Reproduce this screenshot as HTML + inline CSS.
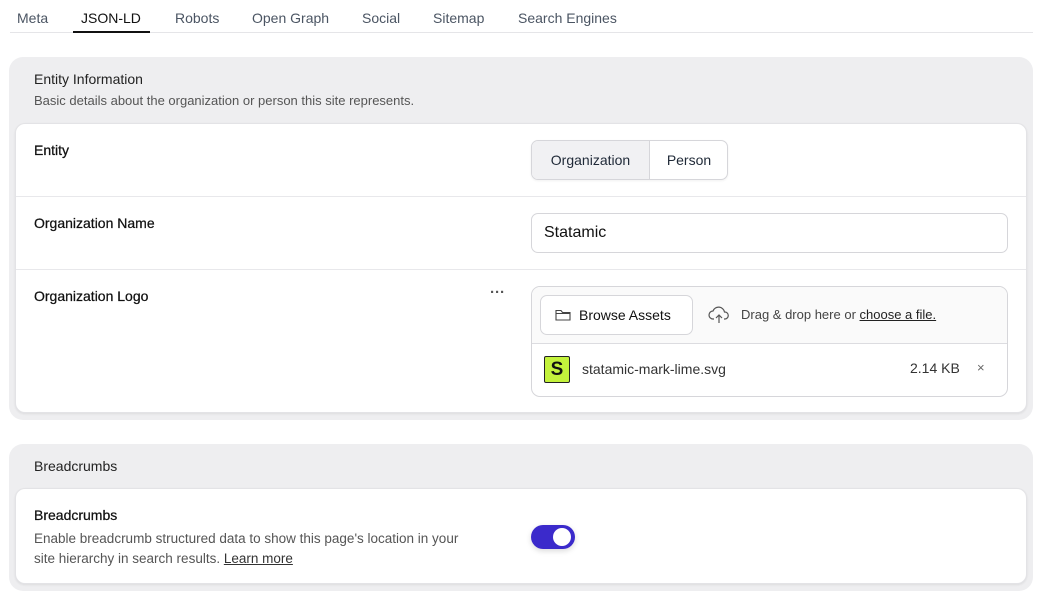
<!DOCTYPE html>
<html><head><style>
*{box-sizing:border-box;margin:0;padding:0}
body{width:1044px;height:600px;background:#fff;font-family:"Liberation Sans",sans-serif;color:#1f2937;position:relative;overflow:hidden}
.a{position:absolute}
.tab{position:absolute;top:10px;font-size:14px;color:#4b5563}
.panel{position:absolute;left:9px;width:1024px;background:#eeeef0;border-radius:14px}
.card{position:absolute;left:6px;width:1012px;background:#fff;border:1px solid #e3e3e6;border-radius:10px;box-shadow:0 1px 2px rgba(0,0,0,.08)}
.lbl{position:absolute;left:18px;font-size:14px;color:#111;font-weight:500;-webkit-text-stroke:0.25px #111}
</style></head><body>
<div class="tab" style="left:17px">Meta</div>
<div class="tab" style="left:81px;color:#111">JSON-LD</div>
<div class="tab" style="left:175px">Robots</div>
<div class="tab" style="left:252px">Open Graph</div>
<div class="tab" style="left:362px">Social</div>
<div class="tab" style="left:433px">Sitemap</div>
<div class="tab" style="left:518px">Search Engines</div>
<div class="a" style="left:10px;top:32px;width:1023px;height:1px;background:#e5e5e8"></div>
<div class="a" style="left:73px;top:31px;width:77px;height:2px;background:#111"></div>

<div class="panel" style="top:57px;height:363px">
 <div class="a" style="left:25px;top:14px;font-size:14px;color:#222">Entity Information</div>
 <div class="a" style="left:25px;top:36px;font-size:13px;color:#555">Basic details about the organization or person this site represents.</div>
 <div class="card" style="top:66px;height:290px">
  <div class="lbl" style="top:18px">Entity</div>
  <div class="a" style="left:515px;top:16px;width:197px;height:40px;border:1px solid #d6d6da;border-radius:7px;overflow:hidden;font-size:14px;box-shadow:0 1px 2px rgba(0,0,0,.06)">
   <div class="a" style="left:0;top:0;width:118px;height:38px;background:#f1f1f3;border-right:1px solid #d6d6da;text-align:center;line-height:38px">Organization</div>
   <div class="a" style="left:118px;top:0;width:78px;height:38px;text-align:center;line-height:38px">Person</div>
  </div>
  <div class="a" style="left:0;top:72px;width:100%;height:1px;background:#e8e8eb"></div>
  <div class="lbl" style="top:91px">Organization Name</div>
  <div class="a" style="left:515px;top:89px;width:477px;height:40px;border:1px solid #d6d6da;border-radius:7px;font-size:16px;line-height:38px;padding-left:12px;color:#111">Statamic</div>
  <div class="a" style="left:0;top:145px;width:100%;height:1px;background:#e8e8eb"></div>
  <div class="lbl" style="top:164px">Organization Logo</div>
  <div class="a" style="left:474px;top:160px;font-size:15px;font-weight:bold;color:#555">···</div>
  <div class="a" style="left:515px;top:162px;width:477px;height:111px;border:1px solid #d6d6da;border-radius:9px;overflow:hidden">
   <div class="a" style="left:0;top:0;width:100%;height:57px;background:#fafafa;border-bottom:1px solid #dcdce0"></div>
   <div class="a" style="left:8px;top:8px;width:153px;height:40px;background:#fff;border:1px solid #d6d6da;border-radius:7px;font-size:14px;line-height:38px;padding-left:38px;color:#111">Browse Assets
    <svg class="a" style="left:14px;top:12px" width="16" height="14" viewBox="0 0 16 14" fill="none" stroke="#444" stroke-width="1.1"><path d="M1 2.5v9.5h14V4.5H7.5L6 2.5H1z"/><path d="M1 5.5h14"/></svg></div>
   <svg class="a" style="left:176px;top:18px" width="22" height="20" viewBox="0 0 22 20" fill="none" stroke="#555" stroke-width="1.2"><path d="M6 14H5a4 4 0 0 1 0-8 6 6 0 0 1 11.5 1A3.5 3.5 0 0 1 17 14h-1"/><path d="M11 18V10M8 13l3-3 3 3"/></svg>
   <div class="a" style="left:209px;top:20px;font-size:13px;color:#444">Drag &amp; drop here or <span style="text-decoration:underline;color:#222">choose a file.</span></div>
   <div class="a" style="left:12px;top:69px;width:26px;height:27px;background:#c3f23c;border:1px solid #222;border-radius:2px;font-weight:bold;font-size:19px;text-align:center;line-height:25px;color:#111">S</div>
   <div class="a" style="left:50px;top:74px;font-size:14px;color:#333">statamic-mark-lime.svg</div>
   <div class="a" style="left:378px;top:73px;font-size:14px;color:#333">2.14 KB</div>
   <div class="a" style="left:445px;top:73px;font-size:13px;color:#666">×</div>
  </div>
 </div>
</div>

<div class="panel" style="top:444px;height:147px">
 <div class="a" style="left:25px;top:14px;font-size:14px;color:#222">Breadcrumbs</div>
 <div class="card" style="top:44px;height:96px">
  <div class="lbl" style="top:18px">Breadcrumbs</div>
  <div class="a" style="left:18px;top:40px;font-size:13.5px;line-height:20px;color:#555;width:440px">Enable breadcrumb structured data to show this page's location in your site hierarchy in search results. <span style="text-decoration:underline;color:#333">Learn more</span></div>
  <div class="a" style="left:515px;top:36px;width:44px;height:24px;background:#3b2acb;border-radius:12px;box-shadow:0 2px 6px rgba(0,0,0,.15)">
   <div class="a" style="left:22px;top:3px;width:18px;height:18px;background:#fff;border-radius:50%"></div>
  </div>
 </div>
</div>
</body></html>
